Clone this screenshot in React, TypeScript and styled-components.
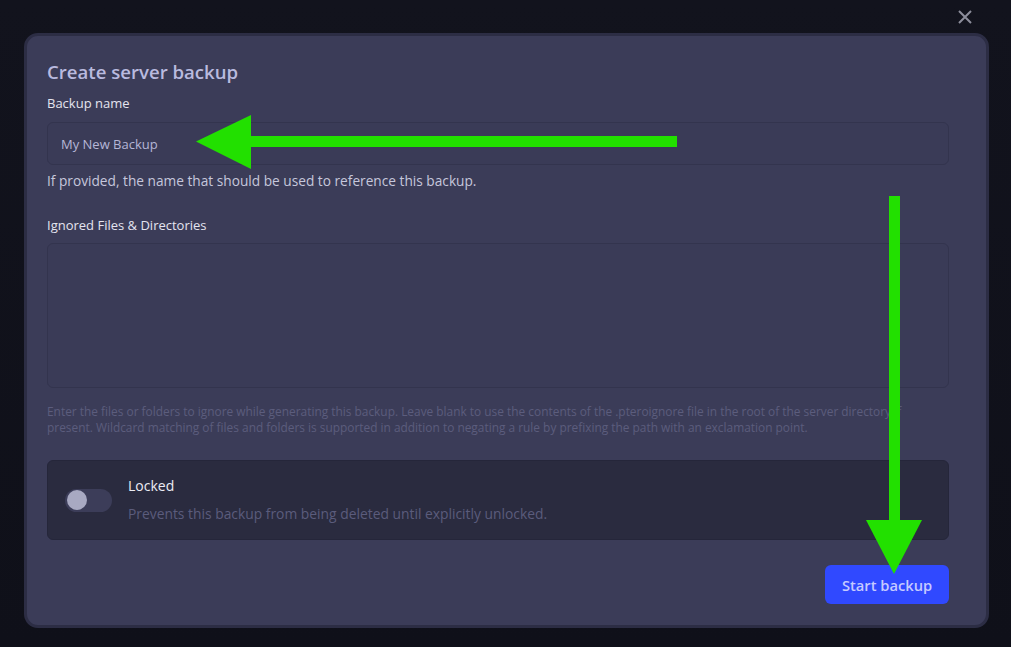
import React from 'react';
import styled, { createGlobalStyle } from 'styled-components';

const GlobalStyle = createGlobalStyle`
  html, body {
    margin: 0;
    padding: 0;
    background: #10111a;
    font-family: "Open Sans", "Noto Sans", "Liberation Sans", sans-serif;
  }
  * { box-sizing: border-box; }
`;

const Page = styled.div`
  position: relative;
  width: 1011px;
  height: 647px;
  overflow: hidden;
  background: linear-gradient(180deg, #12131d 0%, #0f1019 100%);
`;

const CloseRow = styled.div`
  display: flex;
  justify-content: flex-end;
  height: 33px;
  padding: 9px 38px 0 0;
`;

const CloseBtn = styled.button`
  width: 16px;
  height: 16px;
  padding: 0;
  border: 0;
  background: none;
  cursor: pointer;
  svg {
    display: block;
    stroke: #8c8d9b;
  }
`;

const Modal = styled.div`
  margin-left: 24px;
  width: 965px;
  height: 595px;
  border: 3px solid #2c2d44;
  border-radius: 14px;
  background: #3b3c58;
  padding: 22px 37px 21px 20px;
  display: flex;
  flex-direction: column;
`;

const Title = styled.h2`
  margin: 0;
  font-size: 18.6px;
  line-height: 28px;
  font-weight: 600;
  color: #b9badf;
`;

const Label = styled.label<{ $top: number }>`
  display: block;
  margin-top: ${(p) => p.$top}px;
  font-size: 13px;
  line-height: 18px;
  color: #e4e4ef;
`;

const Input = styled.input`
  margin-top: 10px;
  width: 100%;
  height: 43px;
  padding: 0 13px;
  border: 1px solid #33344e;
  border-radius: 6px;
  background: #3a3b57;
  color: #b5b6d6;
  font-family: inherit;
  font-size: 13px;
  outline: none;
`;

const Helper = styled.p`
  margin: 7px 0 0;
  font-size: 13.7px;
  line-height: 18px;
  color: #c6c7dc;
`;

const TextArea = styled.textarea`
  margin-top: 9px;
  width: 100%;
  height: 145px;
  resize: none;
  border: 1px solid #33344e;
  border-radius: 6px;
  background: #3a3b57;
  color: #b5b6d6;
  outline: none;
`;

const SmallNote = styled.p`
  margin: 15px 0 0;
  font-size: 11.9px;
  line-height: 16px;
  color: #5c5d7d;
`;

const LockBox = styled.div`
  margin-top: 25px;
  height: 80px;
  display: flex;
  align-items: center;
  gap: 16px;
  padding-left: 17px;
  background: #2a2b3f;
  border: 1px solid #25263a;
  border-radius: 6px;
`;

const Toggle = styled.div<{ $on: boolean }>`
  position: relative;
  width: 47px;
  height: 23px;
  border-radius: 12px;
  background: ${(p) => (p.$on ? '#3048ff' : '#3c3d59')};
  flex-shrink: 0;
  &::after {
    content: '';
    position: absolute;
    top: 1.5px;
    left: ${(p) => (p.$on ? '25px' : '2px')};
    width: 20px;
    height: 20px;
    border-radius: 50%;
    background: #a8a9c2;
  }
`;

const LockText = styled.div`
  display: flex;
  flex-direction: column;
`;

const LockTitle = styled.span`
  font-size: 14px;
  line-height: 20px;
  color: #ececf5;
`;

const LockDesc = styled.span`
  margin-top: 8px;
  font-size: 13.85px;
  line-height: 20px;
  color: #5b5c7c;
`;

const Footer = styled.div`
  margin-top: 25px;
  display: flex;
  justify-content: flex-end;
`;

const PrimaryBtn = styled.button`
  height: 39px;
  width: 124px;
  border: 0;
  border-radius: 6px;
  background: #3049ff;
  color: #c6caff;
  font-family: inherit;
  font-size: 14.7px;
  font-weight: 600;
  cursor: pointer;
`;

const Overlay = styled.svg`
  position: absolute;
  left: 0;
  top: 0;
  pointer-events: none;
`;

export default function App() {
  return (
    <>
      <GlobalStyle />
      <Page>
        <CloseRow>
          <CloseBtn aria-label="Close">
            <svg width="16" height="16" viewBox="0 0 16 16" fill="none" strokeWidth="2">
              <path d="M2 2 L14 14 M14 2 L2 14" />
            </svg>
          </CloseBtn>
        </CloseRow>
        <Modal>
          <Title>Create server backup</Title>
          <Label $top={8}>Backup name</Label>
          <Input defaultValue="My New Backup" />
          <Helper>If provided, the name that should be used to reference this backup.</Helper>
          <Label $top={26}>Ignored Files &amp; Directories</Label>
          <TextArea />
          <SmallNote>
            Enter the files or folders to ignore while generating this backup. Leave blank to use the contents of the .pteroignore file in the root of the server directory if present. Wildcard matching of files and folders is supported in addition to negating a rule by prefixing the path with an exclamation point.
          </SmallNote>
          <LockBox>
            <Toggle $on={false} />
            <LockText>
              <LockTitle>Locked</LockTitle>
              <LockDesc>Prevents this backup from being deleted until explicitly unlocked.</LockDesc>
            </LockText>
          </LockBox>
          <Footer>
            <PrimaryBtn>Start backup</PrimaryBtn>
          </Footer>
        </Modal>
        <Overlay width="1011" height="647" viewBox="0 0 1011 647">
          <g fill="#22e000">
            <rect x="250" y="136" width="427" height="11" />
            <polygon points="196,141.5 251,115 251,169" />
            <rect x="889" y="196" width="11" height="325" />
            <polygon points="866,520 922,520 894,574" />
          </g>
        </Overlay>
      </Page>
    </>
  );
}
